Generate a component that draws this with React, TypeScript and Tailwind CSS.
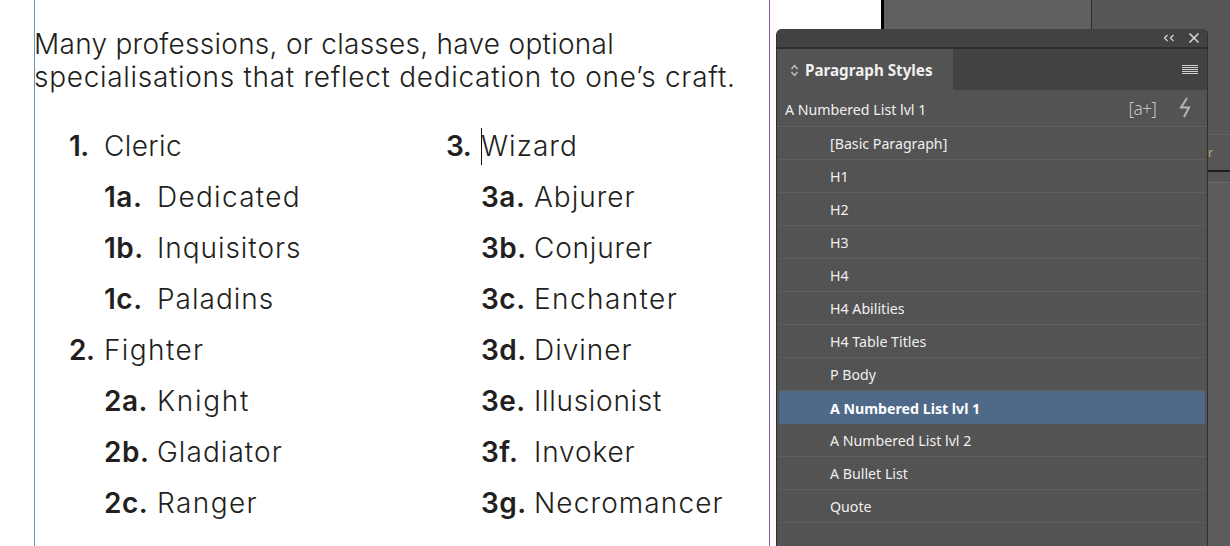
import { Fragment } from "react";

const doc = { fontFamily: '"Inter", "Liberation Sans", sans-serif' };
const ui = { fontFamily: '"Noto Sans", "Open Sans", sans-serif' };

type Item = { n: string; t: string; sp: string; top?: boolean; caret?: boolean };

// letter spacing per word: Inter is narrower than the document's font, and not evenly
const col1: Item[] = [
  { n: "1.", t: "Cleric", sp: "tracking-[0.4px]", top: true },
  { n: "1a.", t: "Dedicated", sp: "tracking-[1.3px]" },
  { n: "1b.", t: "Inquisitors", sp: "tracking-[0.95px]" },
  { n: "1c.", t: "Paladins", sp: "tracking-[1px]" },
  { n: "2.", t: "Fighter", sp: "tracking-[1.4px]", top: true },
  { n: "2a.", t: "Knight", sp: "tracking-[1.7px]" },
  { n: "2b.", t: "Gladiator", sp: "tracking-[1.05px]" },
  { n: "2c.", t: "Ranger", sp: "tracking-[1.4px]" },
];

const col2: Item[] = [
  { n: "3.", t: "Wizard", sp: "tracking-[1.05px]", top: true, caret: true },
  { n: "3a.", t: "Abjurer", sp: "tracking-[1px]" },
  { n: "3b.", t: "Conjurer", sp: "tracking-[0.8px]" },
  { n: "3c.", t: "Enchanter", sp: "tracking-[1.4px]" },
  { n: "3d.", t: "Diviner", sp: "tracking-[1px]" },
  { n: "3e.", t: "Illusionist", sp: "tracking-[0.7px]" },
  { n: "3f.", t: "Invoker", sp: "tracking-[0.85px]" },
  { n: "3g.", t: "Necromancer", sp: "tracking-[1.1px]" },
];

const styles = [
  "[Basic Paragraph]",
  "H1",
  "H2",
  "H3",
  "H4",
  "H4 Abilities",
  "H4 Table Titles",
  "P Body",
  "A Numbered List lvl 1",
  "A Numbered List lvl 2",
  "A Bullet List",
  "Quote",
];

function ListColumn({ items }: { items: Item[] }) {
  return (
    <div className="flex flex-col">
      {items.map((item) => (
        <div key={item.n} className="flex h-[51px] items-center text-[28px] leading-[51px] text-[#231f20]">
          {item.top ? (
            <Fragment>
              <span className="w-[35px] font-semibold tracking-[-0.5px]">{item.n}</span>
              <span className={`relative font-light ${item.sp}`}>
                {item.caret && <span className="absolute left-0 top-[7px] h-[37px] w-px bg-[#111]" />}
                {item.t}
              </span>
            </Fragment>
          ) : (
            <Fragment>
              <span className="ml-[35px] w-[53px] font-semibold tracking-[0.5px]">{item.n}</span>
              <span className={`font-light ${item.sp}`}>{item.t}</span>
            </Fragment>
          )}
        </div>
      ))}
    </div>
  );
}

function StylesPanel() {
  return (
    <div style={ui} className="absolute left-[776px] top-[29px] h-[517px] w-[432px] overflow-hidden rounded-t-[6px] border-x border-[#2f2f2f] bg-[#535353] text-[14.2px] text-[#f0f0f0]">
      <div className="flex h-[20px] items-center justify-end gap-[14px] border-b-2 border-[#2e2e2e] bg-[#424242] pr-[8px]">
        <svg width="12" height="8" viewBox="0 0 12 8" fill="none" stroke="#d4d4d4" strokeWidth="1.3">
          <path d="M4.5 1 1.5 4l3 3M10.5 1l-3 3 3 3" />
        </svg>
        <svg width="10" height="10" viewBox="0 0 10 10" fill="none" stroke="#dcdcdc" strokeWidth="1.5">
          <path d="M.5.5l9 9M9.5.5l-9 9" />
        </svg>
      </div>
      <div className="flex h-[41px] bg-[#424242]">
        <div className="flex w-[176px] items-center bg-[#535353] pl-[13px] pt-[2px] font-bold">
          <svg width="9" height="13" viewBox="0 0 9 13" fill="none" stroke="#c4c4c4" strokeWidth="1.3">
            <path d="M1.5 5 4.5 1.5 7.5 5M1.5 8l3 3.5 3-3.5" />
          </svg>
          <span className="ml-[6px] text-[15.2px]">Paragraph Styles</span>
        </div>
        <div className="flex flex-1 items-center justify-end pr-[9px]">
          <div className="flex w-[16px] flex-col gap-px">
            <div className="h-px bg-[#d0d0d0]" />
            <div className="h-px bg-[#d0d0d0]" />
            <div className="h-px bg-[#d0d0d0]" />
            <div className="h-px bg-[#d0d0d0]" />
            <div className="h-px bg-[#d0d0d0]" />
          </div>
        </div>
      </div>
      <div className="flex h-[37px] items-center justify-between border-b border-[#5f5f5f] pl-[8px] pr-[15px] pt-[4px]">
        <span>A Numbered List lvl 1</span>
        <div className="flex items-center gap-[22px] text-[#c4c4c4]">
          <span className="mb-[4px] text-[17.5px] font-light tracking-[-0.8px]">[a+]</span>
          <svg width="14" height="21" viewBox="0 0 14 21" fill="none" stroke="#b5b5b5" strokeWidth="2" className="mb-[5px]">
            <path d="M9 1 3 10.5h8L6 20" />
          </svg>
        </div>
      </div>
      <div className="flex flex-col px-[2px]">
        {styles.map((s) =>
          s === "A Numbered List lvl 1" ? (
            <div key={s} className="flex h-[33px] items-center bg-[#4e6a88] pl-[51px] pt-[2px] font-bold text-white">
              {s}
            </div>
          ) : (
            <div key={s} className="flex h-[33px] items-center border-b border-[#5f5f5f] pl-[51px] pt-[2px]">
              {s}
            </div>
          ),
        )}
      </div>
    </div>
  );
}

export default function App() {
  return (
    <div className="relative flex h-[546px] w-[1230px] overflow-hidden bg-white">
      {/* page, between the margin guides */}
      <div style={doc} className="ml-[34px] h-full w-[736px] shrink-0 border-x border-l-[#6f93ad] border-r-[#8a5aa6] pt-[28px]">
        <p className="-ml-px text-[28px] font-light leading-[33px] text-[#231f20]">
          <span className="block tracking-[0.27px]">Many professions, or classes, have optional</span>
          <span className="block tracking-[0.7px]">specialisations that reflect dedication to one’s craft.</span>
        </p>
        <div className="mt-[27px] flex pl-[34px]">
          <div className="w-[377px] shrink-0">
            <ListColumn items={col1} />
          </div>
          <div className="flex-1">
            <ListColumn items={col2} />
          </div>
        </div>
      </div>
      {/* pasteboard behind the panel */}
      <div className="ml-[111px] flex h-full flex-1 border-l-[3px] border-black bg-[#5a5a5a]">
        <div className="h-full w-[208px] border-r border-[#2e2e2e] bg-[#606060]" />
        <div className="flex flex-1 flex-col bg-[#565656] pl-[116px]">
          <div className="h-[135px] border-b border-[#626262]" />
          <div className="flex h-[37px] items-center border-b-2 border-[#1c1c1c] text-[12px] text-[#c9a36a]">r</div>
          <div className="h-[11px] border-b border-[#6a6a6a]" />
          <div className="flex-1 bg-[#5c5c5c]" />
        </div>
      </div>
      <StylesPanel />
    </div>
  );
}
